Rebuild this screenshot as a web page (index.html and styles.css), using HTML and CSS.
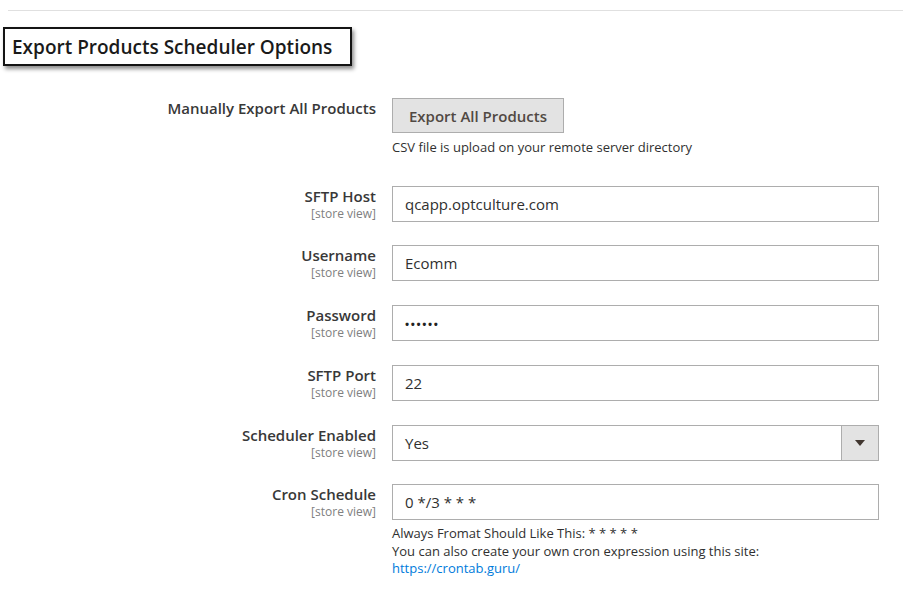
FILE: index.html
```html
<!DOCTYPE html>
<html>
<head>
<meta charset="utf-8">
<link rel="stylesheet" href="styles.css">
</head>
<body>
<div class="page">
  <div class="rule"></div>
  <div class="title-wrap"><h2 class="title">Export Products Scheduler Options</h2></div>
  <div class="form">
    <div class="row row-first">
      <div class="label"><span class="name">Manually Export All Products</span></div>
      <div class="control">
        <button class="btn">Export All Products</button>
        <div class="note">CSV file is upload on your remote server directory</div>
      </div>
    </div>
    <div class="row">
      <div class="label"><span class="name">SFTP Host</span><span class="scope">[store view]</span></div>
      <div class="control"><div class="input">qcapp.optculture.com</div></div>
    </div>
    <div class="row">
      <div class="label"><span class="name">Username</span><span class="scope">[store view]</span></div>
      <div class="control"><div class="input">Ecomm</div></div>
    </div>
    <div class="row">
      <div class="label"><span class="name">Password</span><span class="scope">[store view]</span></div>
      <div class="control"><div class="input pwd">••••••</div></div>
    </div>
    <div class="row">
      <div class="label"><span class="name">SFTP Port</span><span class="scope">[store view]</span></div>
      <div class="control"><div class="input">22</div></div>
    </div>
    <div class="row">
      <div class="label"><span class="name">Scheduler Enabled</span><span class="scope">[store view]</span></div>
      <div class="control">
        <div class="input select"><span class="sel-text">Yes</span><span class="arrow"><svg width="10" height="6" viewBox="0 0 10 6"><path d="M0 0H10L5 6Z" fill="#41362f"/></svg></span></div>
      </div>
    </div>
    <div class="row">
      <div class="label"><span class="name">Cron Schedule</span><span class="scope">[store view]</span></div>
      <div class="control">
        <div class="input">0 */3 * * *</div>
        <div class="note note-cron">Always Fromat Should Like This: * * * * *<br>You can also create your own cron expression using this site:<br><a href="#">https://crontab.guru/</a></div>
      </div>
    </div>
  </div>
</div>
</body>
</html>
```

FILE: styles.css
```css
html, body {
  margin: 0;
  padding: 0;
  background: #fff;
}
body {
  font-family: "Open Sans", "Noto Sans", sans-serif;
  color: #303030;
}
.page {
  width: 903px;
  height: 591px;
  overflow: hidden;
}
.rule {
  margin: 10px 0 0 8px;
  height: 1px;
  background: #e0e0e0;
}
.title-wrap {
  margin: 16px 0 0 3px;
  width: 345px;
  height: 35px;
  border: 2px solid #141414;
  box-shadow: 2px 3px 4px rgba(0,0,0,0.45);
  display: flex;
  align-items: center;
}
.title {
  margin: 0 0 0 7px;
  font-size: 19px;
  font-weight: 600;
  color: #1a1a1a;
}
.form {
  margin-top: 32px;
  display: flex;
  flex-direction: column;
}
.row {
  display: flex;
  align-items: flex-start;
  margin-bottom: 23.8px;
}
.row-first {
  margin-bottom: 29px;
}
.label {
  width: 376px;
  text-align: right;
  display: flex;
  flex-direction: column;
  align-items: flex-end;
  padding-top: 0;
}
.name {
  font-size: 15px;
  font-weight: 600;
  color: #383838;
  line-height: 21px;
}
.scope {
  font-size: 12px;
  color: #808080;
  line-height: 14px;
}
.control {
  margin-left: 16px;
  width: 487px;
}
.btn {
  display: block;
  width: 172px;
  height: 35px;
  margin: 0;
  padding: 0;
  background: #e3e3e3;
  border: 1px solid #adadad;
  font-family: inherit;
  font-size: 15px;
  font-weight: 600;
  color: #514943;
}
.note {
  margin-top: 6px;
  font-size: 13px;
  line-height: 17.5px;
  color: #303030;
}
.note a {
  color: #007bdb;
  text-decoration: none;
}
.note-cron {
  margin-top: 5px;
}
.input {
  box-sizing: border-box;
  height: 36px;
  border: 1px solid #adadad;
  padding: 0 12px;
  display: flex;
  align-items: center;
  font-size: 15px;
  color: #303030;
}
.pwd {
  font-size: 11px;
  letter-spacing: 1.6px;
  font-weight: 700;
  color: #222;
}
.select {
  padding-right: 0;
  justify-content: space-between;
}
.arrow {
  width: 36px;
  height: 34px;
  background: #e3e3e3;
  border-left: 1px solid #adadad;
  display: flex;
  align-items: center;
  justify-content: center;
}
```
